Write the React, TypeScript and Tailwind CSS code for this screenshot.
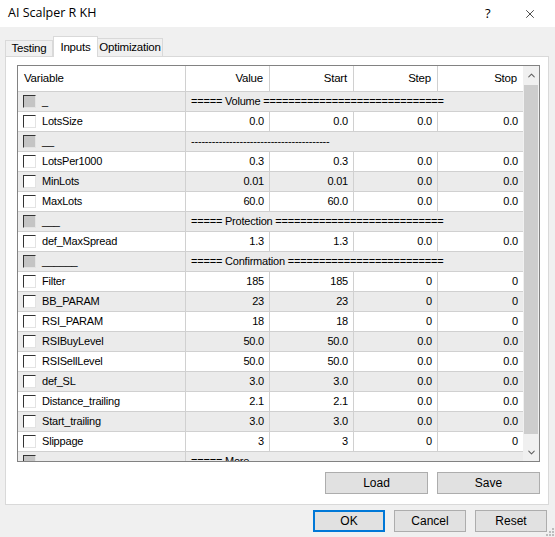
import { ChevronUp, ChevronDown, X } from "lucide-react";

type Row =
  | { kind: "group"; name: string; text: string }
  | { kind: "param"; name: string; v: string; start: string; step: string; stop: string };

const rows: Row[] = [
  { kind: "group", name: "_", text: "===== Volume " + "=".repeat(29) },
  { kind: "param", name: "LotsSize", v: "0.0", start: "0.0", step: "0.0", stop: "0.0" },
  { kind: "group", name: "__", text: "-".repeat(40) },
  { kind: "param", name: "LotsPer1000", v: "0.3", start: "0.3", step: "0.0", stop: "0.0" },
  { kind: "param", name: "MinLots", v: "0.01", start: "0.01", step: "0.0", stop: "0.0" },
  { kind: "param", name: "MaxLots", v: "60.0", start: "60.0", step: "0.0", stop: "0.0" },
  { kind: "group", name: "___", text: "===== Protection " + "=".repeat(27) },
  { kind: "param", name: "def_MaxSpread", v: "1.3", start: "1.3", step: "0.0", stop: "0.0" },
  { kind: "group", name: "______", text: "===== Confirmation " + "=".repeat(25) },
  { kind: "param", name: "Filter", v: "185", start: "185", step: "0", stop: "0" },
  { kind: "param", name: "BB_PARAM", v: "23", start: "23", step: "0", stop: "0" },
  { kind: "param", name: "RSI_PARAM", v: "18", start: "18", step: "0", stop: "0" },
  { kind: "param", name: "RSIBuyLevel", v: "50.0", start: "50.0", step: "0.0", stop: "0.0" },
  { kind: "param", name: "RSISellLevel", v: "50.0", start: "50.0", step: "0.0", stop: "0.0" },
  { kind: "param", name: "def_SL", v: "3.0", start: "3.0", step: "0.0", stop: "0.0" },
  { kind: "param", name: "Distance_trailing", v: "2.1", start: "2.1", step: "0.0", stop: "0.0" },
  { kind: "param", name: "Start_trailing", v: "3.0", start: "3.0", step: "0.0", stop: "0.0" },
  { kind: "param", name: "Slippage", v: "3", start: "3", step: "0", stop: "0" },
  { kind: "group", name: "_______", text: "===== More " + "-".repeat(52) },
];

function Check({ grey }: { grey?: boolean }) {
  return (
    <span
      className={`w-[13px] h-[13px] shrink-0 border-t border-l border-t-[#333] border-l-[#333] border-b border-r border-b-[#e3e3e3] border-r-[#e3e3e3] ${grey ? "bg-[#c4c4c4]" : "bg-white"}`}
    />
  );
}

function Btn({ label, primary, w = "w-[72px]" }: { label: string; primary?: boolean; w?: string }) {
  return (
    <div
      className={`${w} h-[22px] flex items-center justify-center bg-[#e1e1e1] text-[12px] text-black ${primary ? "border-2 border-[#0078d7]" : "border border-[#adadad]"}`}
    >
      {label}
    </div>
  );
}

export default function App() {
  return (
    <div className="w-[555px] h-[537px] bg-[#f0f0f0] overflow-hidden relative font-['Liberation_Sans',Arial,sans-serif] text-black">
      {/* title bar */}
      <div className="h-[27px] bg-white flex items-center pl-[8px] text-[12.5px] font-['Open_Sans',sans-serif]">
        <span className="flex-1">AI Scalper R KH</span>
        <span className="w-[10px] mr-[28px] text-[13px]">?</span>
        <X className="w-[14px] h-[14px] mr-[18px]" strokeWidth={1.2} />
      </div>

      {/* tabs */}
      <div className="h-[29px] flex items-end pl-[5px] text-[11.5px] tracking-[-0.2px]">
        <div className="w-[48px] h-[16px] border border-b-0 border-[#d9d9d9] bg-[#f0f0f0] flex items-center justify-center">Testing</div>
        <div className="w-[45px] h-[21px] border border-b-0 border-[#d9d9d9] bg-white flex items-start pt-[2px] justify-center -mb-px relative z-10">Inputs</div>
        <div className="w-[65px] h-[18px] border border-b-0 border-l-0 border-[#d9d9d9] bg-[#f0f0f0] flex items-center justify-center">Optimization</div>
      </div>

      {/* panel */}
      <div className="ml-[5px] w-[544px] h-[449px] border border-[#d9d9d9] bg-white pt-[8px] pl-[11px]">
        <div className="w-[523px] h-[397px] border border-[#828282] flex overflow-hidden">
          <div className="w-[505px] text-[11px] tracking-[-0.2px]">
            {/* header */}
            <div className="h-[26px] flex border-b border-[#d0d0d0] bg-white text-[11.5px]">
              <div className="w-[168px] border-r border-[#d0d0d0] flex items-center pl-[6px]">Variable</div>
              <div className="w-[84px] border-r border-[#d0d0d0] flex items-center justify-end pr-[6px]">Value</div>
              <div className="w-[84px] border-r border-[#d0d0d0] flex items-center justify-end pr-[6px]">Start</div>
              <div className="w-[84px] border-r border-[#d0d0d0] flex items-center justify-end pr-[6px]">Step</div>
              <div className="w-[85px] flex items-center justify-end pr-[6px]">Stop</div>
            </div>
            {rows.map((r, i) => (
              <div
                key={i}
                className={`h-[20px] flex border-b border-[#d0d0d0] ${i % 2 === 0 ? "bg-[#ebebeb]" : "bg-white"}`}
              >
                <div className="w-[168px] border-r border-[#d0d0d0] flex items-center pl-[5px] gap-[6px]">
                  <Check grey={r.kind === "group"} />
                  <span>{r.name}</span>
                </div>
                {r.kind === "group" ? (
                  <div className="w-[337px] flex items-center pl-[5px] overflow-hidden whitespace-nowrap">
                    {r.text}
                  </div>
                ) : (
                  <>
                    <div className="w-[84px] border-r border-[#d0d0d0] flex items-center justify-end pr-[5px]">{r.v}</div>
                    <div className="w-[84px] border-r border-[#d0d0d0] flex items-center justify-end pr-[5px]">{r.start}</div>
                    <div className="w-[84px] border-r border-[#d0d0d0] flex items-center justify-end pr-[5px]">{r.step}</div>
                    <div className="w-[85px] flex items-center justify-end pr-[5px]">{r.stop}</div>
                  </>
                )}
              </div>
            ))}
          </div>
          {/* scrollbar */}
          <div className="w-[16px] bg-[#f0f0f0] flex flex-col items-center">
            <div className="h-[18px] flex items-center justify-center">
              <ChevronUp className="w-[11px] h-[11px] text-[#606060]" strokeWidth={2.2} />
            </div>
            <div className="w-[14px] h-[349px] mt-[1px] bg-[#cdcdcd]" />
            <div className="flex-1 flex items-end justify-center pb-[3px]">
              <ChevronDown className="w-[11px] h-[11px] text-[#606060]" strokeWidth={2.2} />
            </div>
          </div>
        </div>
        <div className="flex justify-end gap-[9px] pr-[8px] mt-[10px]">
          <Btn label="Load" w="w-[103px]" />
          <Btn label="Save" w="w-[103px]" />
        </div>
      </div>

      {/* bottom buttons */}
      <div className="flex justify-end gap-[9px] pr-[8px] mt-[5px]">
        <Btn label="OK" primary />
        <Btn label="Cancel" />
        <Btn label="Reset" />
      </div>

      {/* size grip */}
      <svg className="absolute right-[1px] bottom-[1px]" width="10" height="10" viewBox="0 0 10 10">
        {[[8, 2], [8, 5], [5, 5], [8, 8], [5, 8], [2, 8]].map(([x, y], i) => (
          <rect key={i} x={x} y={y} width="2" height="2" fill="#bdbdbd" />
        ))}
      </svg>
    </div>
  );
}
